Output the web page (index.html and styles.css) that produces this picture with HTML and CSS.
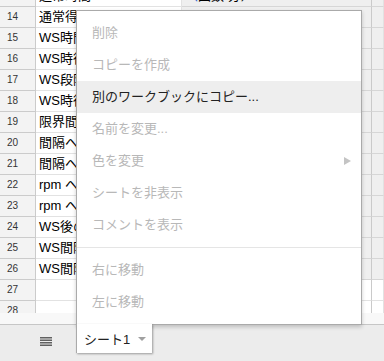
FILE: index.html
```html
<!DOCTYPE html>
<html lang="ja">

<head>
    <meta charset="UTF-8">
    <title>シート1</title>
    <link rel="stylesheet" href="styles.css">
</head>

<body>
    <div class="app">
        <!-- grid of the sheet -->
        <div class="grid">
            <div class="rows">
                <div class="row filled"><div class="rh">13</div><div class="cell">通常時間</div><div class="cell shade"><span class="blue">（</span>回数<span class="red">/</span>分）</div><div class="cell shade"></div></div>
                <div class="row filled"><div class="rh">14</div><div class="cell">通常得点の平均</div><div class="cell shade"></div><div class="cell shade"></div></div>
                <div class="row filled"><div class="rh">15</div><div class="cell">WS時間の平均</div><div class="cell shade"></div><div class="cell shade"></div></div>
                <div class="row filled"><div class="rh">16</div><div class="cell">WS時得点の平均</div><div class="cell shade"></div><div class="cell shade"></div></div>
                <div class="row filled"><div class="rh">17</div><div class="cell">WS段階の平均</div><div class="cell shade"></div><div class="cell shade"></div></div>
                <div class="row filled"><div class="rh">18</div><div class="cell">WS時得点の合計</div><div class="cell shade"></div><div class="cell shade"></div></div>
                <div class="row filled"><div class="rh">19</div><div class="cell">限界間隔の平均</div><div class="cell shade"></div><div class="cell shade"></div></div>
                <div class="row filled"><div class="rh">20</div><div class="cell">間隔へ到達した回数</div><div class="cell shade"></div><div class="cell shade"></div></div>
                <div class="row filled"><div class="rh">21</div><div class="cell">間隔へ到達した割合</div><div class="cell shade"></div><div class="cell shade"></div></div>
                <div class="row filled"><div class="rh">22</div><div class="cell">rpm への換算</div><div class="cell shade"></div><div class="cell shade"></div></div>
                <div class="row filled"><div class="rh">23</div><div class="cell">rpm への換算（WS）</div><div class="cell shade"></div><div class="cell shade"></div></div>
                <div class="row filled"><div class="rh">24</div><div class="cell">WS後の通常時間</div><div class="cell shade"></div><div class="cell shade"></div></div>
                <div class="row filled"><div class="rh">25</div><div class="cell">WS間隔の平均</div><div class="cell shade"></div><div class="cell shade"></div></div>
                <div class="row filled"><div class="rh">26</div><div class="cell">WS間隔の最大</div><div class="cell shade"></div><div class="cell shade"></div></div>
                <div class="row"><div class="rh">27</div><div class="cell"></div><div class="cell"></div><div class="cell"></div></div>
                <div class="row"><div class="rh">28</div><div class="cell"></div><div class="cell"></div><div class="cell"></div></div>
            </div>
        </div>

        <div class="hscroll"></div>

        <!-- sheet tabs -->
        <div class="tabbar">
            <div class="all-sheets">
                <svg width="12" height="9" viewBox="0 0 12 9">
                    <rect x="0" y="0" width="12" height="1.5" fill="#616161"/>
                    <rect x="0" y="2.5" width="12" height="1.5" fill="#616161"/>
                    <rect x="0" y="5" width="12" height="1.5" fill="#616161"/>
                    <rect x="0" y="7.5" width="12" height="1.5" fill="#616161"/>
                </svg>
            </div>
            <div class="tab">
                <span>シート1</span>
                <svg class="tab-arrow" width="8" height="4" viewBox="0 0 8 4"><polygon points="0,0 8,0 4,4" fill="#a0a0a0"/></svg>
            </div>
        </div>

        <!-- context menu of the tab -->
        <div class="menu">
            <div class="item">削除</div>
            <div class="item">コピーを作成</div>
            <div class="item active">別のワークブックにコピー...</div>
            <div class="item">名前を変更...</div>
            <div class="item">色を変更<svg width="7" height="8" viewBox="0 0 7 8"><polygon points="0,0 7,4 0,8" fill="#c4c4c4"/></svg></div>
            <div class="item">シートを非表示</div>
            <div class="item">コメントを表示</div>
            <div class="sep"></div>
            <div class="item">右に移動</div>
            <div class="item">左に移動</div>
        </div>
    </div>
</body>

</html>
```

FILE: styles.css
```css
/* page */
body {
    margin: 0;
    padding: 0;
}

.app {
    position: relative;
    width: 384px;
    height: 361px;
    display: flex;
    flex-direction: column;
    background: #ececec;
    font-family: 'Liberation Sans', 'Noto Sans CJK JP', sans-serif;
    overflow: hidden;
}

/* grid */
.grid {
    height: 313px;
    overflow: hidden;
    background: #fff;
    flex-shrink: 0;
}

.rows {
    margin-top: -14px;
}

.row {
    display: grid;
    grid-template-columns: 36px 146px 190px 1fr;
    height: 21px;
}

.row > div {
    box-sizing: border-box;
    border-right: 1px solid #e2e2e2;
    border-bottom: 1px solid #e2e2e2;
}

.rh {
    background: #f3f3f3;
    border-color: #cbcbcb !important;
    font-size: 10px;
    line-height: 20px;
    color: #333;
    padding-left: 7px;
}

.cell {
    font-size: 13px;
    line-height: 20px;
    padding-left: 3px;
    white-space: nowrap;
    overflow: hidden;
    color: #000;
}

.filled .shade {
    background: #efefef;
    border-bottom-color: #d6d6d6;
}

.row > .cell:nth-child(3) {
    border-right-color: #cacaca;
}

.blue {
    color: #1155cc;
}

.red {
    color: #cc0000;
}

/* scroll strip under the grid */
.hscroll {
    height: 12px;
    flex-shrink: 0;
    box-sizing: border-box;
    background: #f8f8f8;
    border-bottom: 1px solid #c6c6c6;
}

/* tabs bar */
.tabbar {
    flex: 1;
    display: flex;
    align-items: flex-start;
    padding-left: 40px;
}

.all-sheets {
    margin-top: 12px;
    line-height: 0;
}

.tab {
    position: relative;
    z-index: 2;
    margin-top: -1px;
    margin-left: 24px;
    width: 76px;
    height: 29px;
    box-sizing: border-box;
    display: flex;
    align-items: center;
    padding-left: 7px;
    background: #fff;
    border-left: 1px solid #aaa;
    box-shadow: 1px 1px 2px rgba(0, 0, 0, 0.35);
    font-size: 13px;
    color: #222;
}

.tab-arrow {
    margin-left: 8px;
    margin-top: 1px;
}

/* context menu */
.menu {
    position: absolute;
    z-index: 1;
    left: 76px;
    top: 10px;
    width: 286px;
    box-sizing: border-box;
    padding: 6px 0;
    background: #fff;
    border: 1px solid #aaa;
    box-shadow: 0 2px 4px rgba(0, 0, 0, 0.2);
}

.item {
    height: 32px;
    line-height: 32px;
    padding: 0 10px 0 15px;
    display: flex;
    justify-content: space-between;
    align-items: center;
    font-size: 13px;
    color: #b8b8b8;
}

.item.active {
    background: #eee;
    color: #222;
}

.sep {
    height: 1px;
    margin: 6px 0;
    background: #e5e5e5;
}
```
